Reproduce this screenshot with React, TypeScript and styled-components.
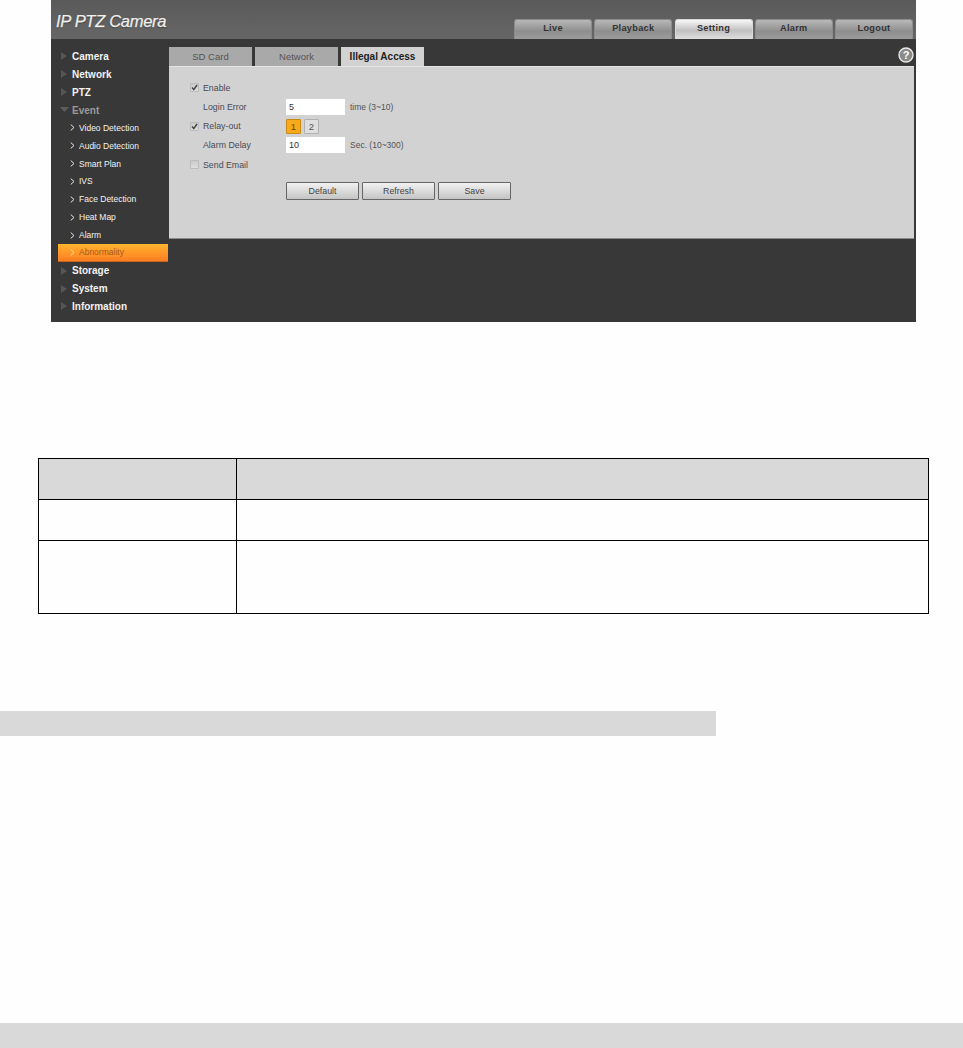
import styled, { createGlobalStyle } from "styled-components";

const GlobalStyle = createGlobalStyle`
  html, body {
    margin: 0;
    padding: 0;
    background: #fefefe;
  }
  body {
    font-family: "Liberation Sans", Arial, sans-serif;
  }
`;

const topTabs = ["Live", "Playback", "Setting", "Alarm", "Logout"];

const menu: { label: string; kind: "main" | "open" | "sub" | "active" }[] = [
  { label: "Camera", kind: "main" },
  { label: "Network", kind: "main" },
  { label: "PTZ", kind: "main" },
  { label: "Event", kind: "open" },
  { label: "Video Detection", kind: "sub" },
  { label: "Audio Detection", kind: "sub" },
  { label: "Smart Plan", kind: "sub" },
  { label: "IVS", kind: "sub" },
  { label: "Face Detection", kind: "sub" },
  { label: "Heat Map", kind: "sub" },
  { label: "Alarm", kind: "sub" },
  { label: "Abnormality", kind: "active" },
  { label: "Storage", kind: "main" },
  { label: "System", kind: "main" },
  { label: "Information", kind: "main" },
];

function Check({ on }: { on: boolean }) {
  return (
    <CheckBox>
      {on && (
        <svg width="9" height="9" viewBox="0 0 9 9">
          <path d="M2 4.6 L3.8 6.6 L7 2" fill="none" stroke="#444" strokeWidth="1.5" />
        </svg>
      )}
    </CheckBox>
  );
}

export default function App() {
  return (
    <>
      <GlobalStyle />
      <Page>
        <Frame>
          <Header>
            <Logo>IP PTZ Camera</Logo>
            <TopTabs>
              {topTabs.map((t) => (
                <TopTab key={t} $active={t === "Setting"}>
                  {t}
                </TopTab>
              ))}
            </TopTabs>
          </Header>
          <Body>
            <Sidebar>
              {menu.map((m) => (
                <MenuRow key={m.label} $kind={m.kind}>
                  {m.kind === "main" && (
                    <svg width="6" height="8" viewBox="0 0 6 8">
                      <path d="M0 0 L6 4 L0 8 Z" fill="#565656" />
                    </svg>
                  )}
                  {m.kind === "open" && (
                    <svg width="9" height="6" viewBox="0 0 9 6">
                      <path d="M0 0 L9 0 L4.5 5 Z" fill="#5c5c5c" />
                    </svg>
                  )}
                  {(m.kind === "sub" || m.kind === "active") && (
                    <svg width="5" height="7" viewBox="0 0 5 7">
                      <path
                        d="M0.7 0.5 L4 3.5 L0.7 6.5"
                        fill="none"
                        stroke={m.kind === "active" ? "#ffe0a0" : "#e8e8e8"}
                        strokeWidth="1"
                      />
                    </svg>
                  )}
                  <MenuLabel $kind={m.kind}>{m.label}</MenuLabel>
                </MenuRow>
              ))}
            </Sidebar>
            <Content>
              <TabBar>
                <SubTab>SD Card</SubTab>
                <SubTab>Network</SubTab>
                <SubTab $active>Illegal Access</SubTab>
                <HelpIcon>
                  <svg width="16" height="16" viewBox="0 0 16 16">
                    <circle cx="8" cy="8" r="7" fill="#8a8a8a" stroke="#e8e8e8" strokeWidth="1.4" />
                    <text
                      x="8"
                      y="12"
                      textAnchor="middle"
                      fontSize="11"
                      fontWeight="700"
                      fontFamily="Liberation Sans, sans-serif"
                      fill="#fff"
                    >
                      ?
                    </text>
                  </svg>
                </HelpIcon>
              </TabBar>
              <Panel>
                <FormGrid>
                  <Check on />
                  <FieldLabel>Enable</FieldLabel>
                  <span />

                  <span />
                  <FieldLabel>Login Error</FieldLabel>
                  <Control>
                    <TextBox>5</TextBox>
                    <Unit>time (3~10)</Unit>
                  </Control>

                  <Check on />
                  <FieldLabel>Relay-out</FieldLabel>
                  <Control>
                    <RelayButton $on>1</RelayButton>
                    <RelayButton>2</RelayButton>
                  </Control>

                  <span />
                  <FieldLabel>Alarm Delay</FieldLabel>
                  <Control>
                    <TextBox>10</TextBox>
                    <Unit>Sec. (10~300)</Unit>
                  </Control>

                  <Check on={false} />
                  <FieldLabel>Send Email</FieldLabel>
                  <span />
                </FormGrid>
                <Actions>
                  <ActionButton>Default</ActionButton>
                  <ActionButton>Refresh</ActionButton>
                  <ActionButton>Save</ActionButton>
                </Actions>
              </Panel>
            </Content>
          </Body>
        </Frame>

        <ParamTable>
          <colgroup>
            <col style={{ width: 198 }} />
            <col />
          </colgroup>
          <tbody>
            <HeadRow>
              <Cell />
              <Cell />
            </HeadRow>
            <ShortRow>
              <Cell />
              <Cell />
            </ShortRow>
            <TallRow>
              <Cell />
              <Cell />
            </TallRow>
          </tbody>
        </ParamTable>

        <NoteBar />
        <WideBar />
      </Page>
    </>
  );
}

const Page = styled.div`
  width: 963px;
  height: 1048px;
  overflow: hidden;
`;

const Frame = styled.div`
  width: 865px;
  height: 322px;
  margin-left: 51px;
  background: #383838;
  display: flex;
  flex-direction: column;
`;

const Header = styled.header`
  height: 39px;
  flex: none;
  padding: 0 3px 0 5px;
  display: flex;
  justify-content: space-between;
  background: linear-gradient(#5a5a5a, #666666);
`;

const Logo = styled.div`
  margin-top: 11px;
  font-size: 16.5px;
  line-height: 20px;
  font-style: italic;
  -webkit-text-stroke: 0.25px #f0f0f0;
  color: #f0f0f0;
  letter-spacing: -0.3px;
  text-shadow: 0 1px 1px #333;
`;

const TopTabs = styled.nav`
  display: flex;
  gap: 2.25px;
  align-self: flex-end;
`;

const TopTab = styled.div<{ $active?: boolean }>`
  width: 78px;
  height: 20px;
  box-sizing: border-box;
  border-radius: 3px 3px 0 0;
  border: 1px solid ${(p) => (p.$active ? "#d8d8d8" : "#8c8c8c")};
  border-bottom: none;
  background: ${(p) =>
    p.$active
      ? "linear-gradient(#f8f8f8, #c0c0c0 55%, #dedede)"
      : "linear-gradient(#b8b8b8, #8e8e8e 60%, #9c9c9c)"};
  color: #333;
  font-size: 9.2px;
  font-weight: 700;
  letter-spacing: 0.3px;
  line-height: 17px;
  text-align: center;
`;

const Body = styled.div`
  flex: 1;
  display: flex;
`;

const Sidebar = styled.aside`
  width: 118px;
  flex: none;
  padding-top: 8.5px;
`;

const MenuRow = styled.div<{ $kind: string }>`
  height: 17.86px;
  box-sizing: border-box;
  display: flex;
  align-items: center;
  gap: ${(p) => (p.$kind === "main" || p.$kind === "open" ? "0" : "4px")};
  margin-left: ${(p) => (p.$kind === "active" ? "7px" : "0")};
  padding-left: ${(p) => {
    if (p.$kind === "main") return "10px";
    if (p.$kind === "open") return "9px";
    if (p.$kind === "active") return "12px";
    return "19px";
  }};
  width: ${(p) => (p.$kind === "active" ? "110px" : "auto")};
  background: ${(p) =>
    p.$kind === "active" ? "linear-gradient(#ffb52e, #ff7d22)" : "transparent"};
  border-bottom: ${(p) => (p.$kind === "active" ? "1px solid #c8641c" : "none")};
`;

const MenuLabel = styled.span<{ $kind: string }>`
  font-size: ${(p) => (p.$kind === "sub" || p.$kind === "active" ? "8.5px" : "10px")};
  font-weight: ${(p) => (p.$kind === "main" || p.$kind === "open" ? 700 : 400)};
  margin-left: ${(p) => {
    if (p.$kind === "main") return "5px";
    if (p.$kind === "open") return "3px";
    return "0";
  }};
  color: ${(p) => {
    if (p.$kind === "open") return "#9a9a9a";
    if (p.$kind === "active") return "#a8581f";
    return "#f2f2f2";
  }};
`;

const Content = styled.main`
  width: 745px;
  flex: none;
  padding-top: 8px;
`;

const TabBar = styled.div`
  height: 19px;
  display: flex;
  gap: 3px;
  position: relative;
`;

const SubTab = styled.div<{ $active?: boolean }>`
  width: 83px;
  background: ${(p) => (p.$active ? "#d2d2d2" : "#a9a9a9")};
  color: ${(p) => (p.$active ? "#222" : "#555")};
  font-size: ${(p) => (p.$active ? "10px" : "9.5px")};
  font-weight: ${(p) => (p.$active ? 700 : 400)};
  line-height: 20px;
  text-align: center;
`;

const HelpIcon = styled.div`
  position: absolute;
  right: 0;
  top: 0;
  height: 16px;
`;

const Panel = styled.section`
  height: 173px;
  box-sizing: border-box;
  background: #d2d2d2;
  border-top: 1px solid #e4e4e4;
  border-bottom: 1px solid #8a8a8a;
  padding: 11px 0 0 21px;
`;

const FormGrid = styled.div`
  display: grid;
  grid-template-columns: 13px 83px 1fr;
  grid-auto-rows: 19.25px;
  align-items: center;
`;

const CheckBox = styled.span`
  width: 9px;
  height: 9px;
  border-radius: 1px;
  display: block;
  background: linear-gradient(#c8c8c8, #e0e0e0);
  box-shadow: inset 0 0 0 1px #bcbcbc;
  svg {
    display: block;
  }
`;

const FieldLabel = styled.span`
  font-size: 8.8px;
  color: #4a4a52;
`;

const Control = styled.div`
  display: flex;
  align-items: center;
  gap: 3px;
`;

const TextBox = styled.div`
  width: 59px;
  height: 16px;
  box-sizing: border-box;
  background: #fff;
  padding-left: 3px;
  margin-right: 2px;
  font-size: 9px;
  line-height: 16px;
  color: #333;
`;

const Unit = styled.span`
  font-size: 8.5px;
  color: #555;
`;

const RelayButton = styled.div<{ $on?: boolean }>`
  width: 15px;
  height: 15px;
  box-sizing: border-box;
  border-radius: 1px;
  border: 1px solid ${(p) => (p.$on ? "#c98a10" : "#b0b0b0")};
  background: ${(p) => (p.$on ? "#f7a81b" : "#dedede")};
  color: ${(p) => (p.$on ? "#6b4a00" : "#555")};
  font-size: 9.5px;
  line-height: 14px;
  text-align: center;
`;

const Actions = styled.div`
  display: flex;
  gap: 3px;
  margin: 8px 0 0 96px;
`;

const ActionButton = styled.div`
  width: 73px;
  height: 18px;
  box-sizing: border-box;
  border: 1px solid #666;
  border-radius: 1px;
  background: linear-gradient(#f2f2f2, #c4c4c4);
  color: #444;
  font-size: 8.8px;
  line-height: 16px;
  text-align: center;
`;

const ParamTable = styled.table`
  width: 891px;
  margin: 136px 0 0 38px;
  border-collapse: collapse;
  table-layout: fixed;
`;

const Cell = styled.td`
  border: 1px solid #000;
  padding: 0;
`;

const HeadRow = styled.tr`
  height: 41px;
  background: #d9d9d9;
`;

const ShortRow = styled.tr`
  height: 41px;
`;

const TallRow = styled.tr`
  height: 73px;
`;

const NoteBar = styled.div`
  width: 716px;
  height: 25px;
  margin-top: 97px;
  background: #d9d9d9;
`;

const WideBar = styled.div`
  width: 963px;
  height: 25px;
  margin-top: 287px;
  background: #d9d9d9;
`;
